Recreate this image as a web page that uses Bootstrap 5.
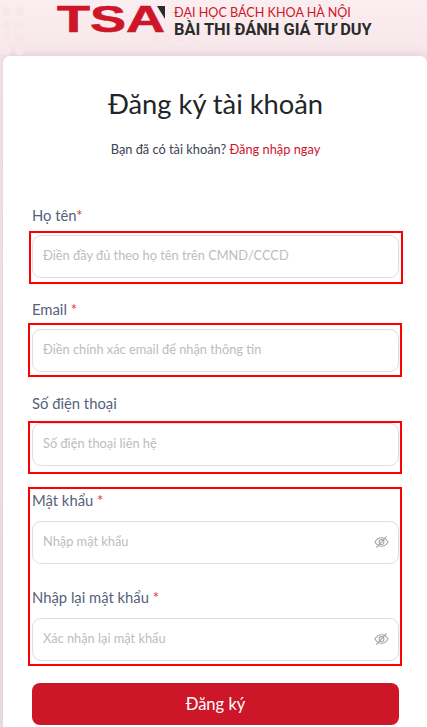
<!DOCTYPE html>
<html lang="vi">

<head>
    <meta charset="UTF-8">
    <meta name="viewport" content="width=device-width, initial-scale=1.0">
    <title>Đăng ký tài khoản</title>
    <link href="https://cdn.jsdelivr.net/npm/bootstrap@5.3.0/dist/css/bootstrap.min.css" rel="stylesheet">
    <style>
        html,
        body {
            height: 727px;
            overflow: hidden;
        }

        body {
            font-family: Lato, "Liberation Sans", sans-serif;
            background: linear-gradient(180deg, #fbeef0 0%, #f6e6e9 60px, #ebe1e4 100%);
        }

        /* header with the faint dots behind the logo */
        .site-top {
            position: relative;
            height: 56px;
            padding-top: 6px;
            padding-left: 57px;
        }

        .site-top::before,
        .site-top::after {
            content: "";
            position: absolute;
            background-image: radial-gradient(circle, #f7e7ea 4px, transparent 5px);
            background-size: 13px 13px;
        }

        .site-top::before {
            left: 0;
            top: 5px;
            width: 26px;
            height: 52px;
        }

        .site-top::after {
            left: 148px;
            top: 31px;
            width: 52px;
            height: 13px;
        }

        .logo-mark {
            position: relative;
            z-index: 1;
            width: 108px;
            height: 27px;
            margin-right: 9px;
            flex-shrink: 0;
        }

        .logo-letters {
            display: block;
            font-family: "Liberation Sans", sans-serif;
            font-weight: 700;
            font-size: 37px;
            line-height: 27px;
            color: #cd1628;
            transform: scaleX(1.46);
            transform-origin: left center;
            -webkit-text-stroke: 0.6px #cd1628;
        }

        .logo-corner {
            position: absolute;
            top: 0;
            right: 0;
            width: 8px;
            height: 13px;
            background: #2b2b2b;
            clip-path: polygon(0 0, 100% 0, 100% 100%);
        }

        .logo-words {
            position: relative;
            z-index: 1;
        }

        .logo-school {
            font-size: 12.600px;
            line-height: 14px;
            color: #cd1628;
        }

        .logo-exam {
            font-family: Roboto, "Liberation Sans", sans-serif;
            font-weight: 700;
            font-size: 16.400px;
            line-height: 20px;
            color: #2b2b2b;
        }

        .form-sheet {
            margin-left: 3px;
            height: 671px;
            padding: 28px 28px 0 29px;
            background: #fff;
            border-radius: 7px 7px 0 0;
            box-shadow: 0 -2px 8px rgba(120, 80, 90, .15);
        }

        .sheet-title {
            font-size: 27.300px;
            font-weight: 400;
            line-height: 40px;
            color: #212529;
            margin-bottom: 15px;
        }

        .sheet-sub {
            font-size: 12.800px;
            line-height: 20px;
            color: #3b4252;
            margin-bottom: 46px;
        }

        .sheet-sub a {
            color: #cd1628;
            text-decoration: none;
        }

        .field-label {
            display: block;
            font-size: 14.800px;
            line-height: 20px;
            color: #566178;
            margin-bottom: 0;
        }

        .req {
            color: #e53444;
        }

        .red-box {
            border: 2px solid #f00;
        }

        .field-input {
            height: 43px;
            font-size: 12.800px;
            color: #333;
            border: 1px solid #dedede;
            border-radius: 9px;
            padding: 0 10px 3px;
        }

        .field-input::placeholder {
            color: #bdbdbd;
        }

        .eye-btn {
            position: absolute;
            top: 50%;
            right: 10px;
            transform: translateY(-50%);
            width: 15px;
            height: 15px;
            margin-top: -1px;
            color: #a6a6a6;
        }

        .submit-btn {
            display: block;
            height: 42px;
            font-size: 16.500px;
            color: #fff;
            background: #cd1628;
            border: 0;
            border-radius: 8px;
        }

        .label-name { margin: 0 0 6px 0; }
        .label-mail { margin: 0 0 4px 0; }
        .label-phone { margin: 0 0 8px 0; }
        .box-name { margin: 0 -4px 15px -3px; padding: 2px 2px 4px 1px; }
        .box-mail { margin: 0 -3px 16px -4px; padding: 4px 1px 3px 2px; }
        .box-phone { margin: 0 -3px 13px -4px; padding: 0 1px 6px 2px; }
        .box-pass { margin: 0 -3px 17px -4px; padding: 1px 1px 3px 2px; }
        .box-pass .field-label { margin-bottom: 11px; }
        .pass-row { margin-bottom: 23px; }
        .pass-row:last-child { margin-bottom: 0; }
    </style>
</head>

<body>
    <div class="site-top d-flex">
        <div class="logo-mark">
            <span class="logo-letters">TSA</span>
            <span class="logo-corner"></span>
        </div>
        <div class="logo-words">
            <div class="logo-school">ĐẠI HỌC BÁCH KHOA HÀ NỘI</div>
            <div class="logo-exam">BÀI THI ĐÁNH GIÁ TƯ DUY</div>
        </div>
    </div>

    <div class="form-sheet">
        <h1 class="sheet-title text-center">Đăng ký tài khoản</h1>
        <p class="sheet-sub text-center">Bạn đã có tài khoản? <a href="#">Đăng nhập ngay</a></p>

        <form>
            <label class="field-label label-name">Họ tên<span class="req">*</span></label>
            <div class="red-box box-name">
                <input class="form-control field-input" type="text" placeholder="Điền đầy đủ theo họ tên trên CMND/CCCD">
            </div>

            <label class="field-label label-mail">Email <span class="req">*</span></label>
            <div class="red-box box-mail">
                <input class="form-control field-input" type="email" placeholder="Điền chính xác email để nhận thông tin">
            </div>

            <label class="field-label label-phone">Số điện thoại</label>
            <div class="red-box box-phone">
                <input class="form-control field-input" type="tel" placeholder="Số điện thoại liên hệ">
            </div>

            <div class="red-box box-pass">
                <label class="field-label">Mật khẩu <span class="req">*</span></label>
                <div class="position-relative pass-row">
                    <input class="form-control field-input" type="password" placeholder="Nhập mật khẩu">
                    <svg class="eye-btn" viewBox="0 0 16 16" fill="none" stroke="currentColor" stroke-width="1.2">
                        <path d="M1 8c1.8-3 4.2-4.5 7-4.5S13.200 5 15 8c-1.800 3-4.200 4.500-7 4.500S2.800 11 1 8z" />
                        <circle cx="8" cy="8" r="2.600" />
                        <path d="M2.500 14L13.500 2" />
                    </svg>
                </div>
                <label class="field-label">Nhập lại mật khẩu <span class="req">*</span></label>
                <div class="position-relative pass-row">
                    <input class="form-control field-input" type="password" placeholder="Xác nhận lại mật khẩu">
                    <svg class="eye-btn" viewBox="0 0 16 16" fill="none" stroke="currentColor" stroke-width="1.2">
                        <path d="M1 8c1.8-3 4.2-4.5 7-4.5S13.200 5 15 8c-1.800 3-4.200 4.500-7 4.500S2.800 11 1 8z" />
                        <circle cx="8" cy="8" r="2.600" />
                        <path d="M2.500 14L13.500 2" />
                    </svg>
                </div>
            </div>

            <button class="btn submit-btn w-100" type="button">Đăng ký</button>
        </form>
    </div>

    <script src="https://cdn.jsdelivr.net/npm/bootstrap@5.3.0/dist/js/bootstrap.bundle.min.js"></script>
</body>

</html>
